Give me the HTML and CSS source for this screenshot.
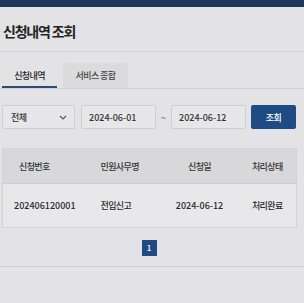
FILE: index.html
```html
<!DOCTYPE html>
<html>
<head>
<meta charset="utf-8">
<title>신청내역 조회</title>
<link rel="stylesheet" href="styles.css">
</head>
<body>
<div class="topbar"></div>

<h1 class="title">신청내역 조회</h1>

<div class="page">
	<div class="tabs">
		<div class="tab active">신청내역</div>
		<div class="tab">서비스 종합</div>
	</div>

	<form class="filter">
		<div class="select">
			<span>전체</span>
			<svg width="8" height="5" viewBox="0 0 8 5"><path d="M1 1l3 3 3-3" fill="none" stroke="#555" stroke-width="1.1"/></svg>
		</div>
		<div class="date">2024-06-01</div>
		<span class="tilde">~</span>
		<div class="date">2024-06-12</div>
		<button type="button" class="search">조회</button>
	</form>

	<table class="list">
		<colgroup>
			<col class="w1"><col class="w2"><col class="w3"><col class="w4">
		</colgroup>
		<thead>
			<tr>
				<th class="c1">신청번호</th>
				<th class="c2">민원사무명</th>
				<th class="c3">신청일</th>
				<th class="c4">처리상태</th>
			</tr>
		</thead>
		<tbody>
			<tr>
				<td class="c1">202406120001</td>
				<td class="c2">전입신고</td>
				<td class="c3">2024-06-12</td>
				<td class="c4 done">처리완료</td>
			</tr>
		</tbody>
	</table>

	<div class="paging">
		<span class="pg current">1</span>
	</div>
</div>
<div class="bottomline"></div>
</body>
</html>
```

FILE: styles.css
```css
/* base */
body{
	margin: 0;
	background: #e3e3e5;
	font-family: "Noto Sans CJK KR", "Noto Sans", sans-serif;
	font-weight: 500;
	color: #2a2a2a;
}
.topbar{
	height: 7px;
	background: #1d3658;
}
.title{
	margin: 0;
	padding: 14px 3px 9px;
	font-size: 14px;
	line-height: 21px;
	font-weight: 700;
	letter-spacing: -1.2px;
	color: #222;
	border-bottom: 1px solid #d2d2d4;
}
.page{
	padding: 0 8px 0 2px;
}

/* tabs */
.tabs{
	display: flex;
	gap: 6px;
	padding-top: 11px;
	border-bottom: 1px solid #d0d0d2;
	margin: 0 -8px 0 -2px;
	padding-left: 2px;
}
.tab{
	height: 25px;
	line-height: 25px;
	font-size: 9px;
	letter-spacing: -0.6px;
	text-align: center;
	color: #333;
	box-sizing: border-box;
}
.tab.active{
	width: 55px;
	border-bottom: 2px solid #2b4a74;
	margin-bottom: -1px;
	color: #222;
}
.tab:not(.active){
	width: 65px;
	background: #dbdbdd;
	border-radius: 3px 3px 0 0;
	color: #444;
}

/* filter */
.filter{
	display: flex;
	align-items: center;
	margin-top: 16px;
	height: 24px;
}
.select, .date{
	height: 24px;
	box-sizing: border-box;
	border: 1px solid #cfcfd2;
	border-radius: 2px;
	background: #e7e7e9;
	font-size: 9px;
	display: flex;
	align-items: center;
	color: #333;
}
.select{
	width: 73px;
	padding: 0 7px 0 8px;
	justify-content: space-between;
	letter-spacing: -0.6px;
	margin-right: 6px;
}
.date{
	width: 75px;
	padding-left: 7px;
}
.tilde{
	width: 15px;
	text-align: center;
	font-size: 9px;
	color: #555;
}
.search{
	margin-left: 5px;
	width: 45px;
	height: 24px;
	border: 0;
	border-radius: 2px;
	background: #1f4b85;
	color: #fff;
	font-family: inherit;
	font-weight: 500;
	font-size: 9px;
	letter-spacing: -0.5px;
	padding: 0;
}

/* table */
.list{
	margin-top: 19px;
	width: 294px;
	table-layout: fixed;
	border-collapse: collapse;
	border: 1px solid #d4d4d6;
	font-size: 9px;
}
.w1{ width: 86px; }
.w2{ width: 72px; }
.w3{ width: 78px; }
.w4{ width: 58px; }
.list th{
	height: 34px;
	background: #d8d8da;
	font-weight: 500;
	color: #333;
	letter-spacing: -0.6px;
	border-bottom: 1px solid #cdcdd0;
	padding: 0;
	white-space: nowrap;
}
.list td{
	height: 43px;
	background: #e8e8ea;
	padding: 0;
	color: #2a2a2a;
	white-space: nowrap;
}
.c1{ text-align: left; }
th.c1{ padding-left: 16px; }
td.c1{ padding-left: 11px; }
.list .c2{ text-align: left; padding-left: 12px; letter-spacing: -0.6px; }
.c3{ text-align: center; }
.c4{ text-align: center; letter-spacing: -0.6px; }
.done{ color: #2f7d3f; }

/* paging */
.paging{
	display: flex;
	justify-content: center;
	margin-top: 12px;
	padding-bottom: 10px;
}
.pg{
	width: 15px;
	height: 16px;
	line-height: 16px;
	text-align: center;
	font-size: 8px;
	color: #fff;
	background: #1f4b85;
}
.bottomline{
	border-top: 1px solid #d0d0d2;
}
```
